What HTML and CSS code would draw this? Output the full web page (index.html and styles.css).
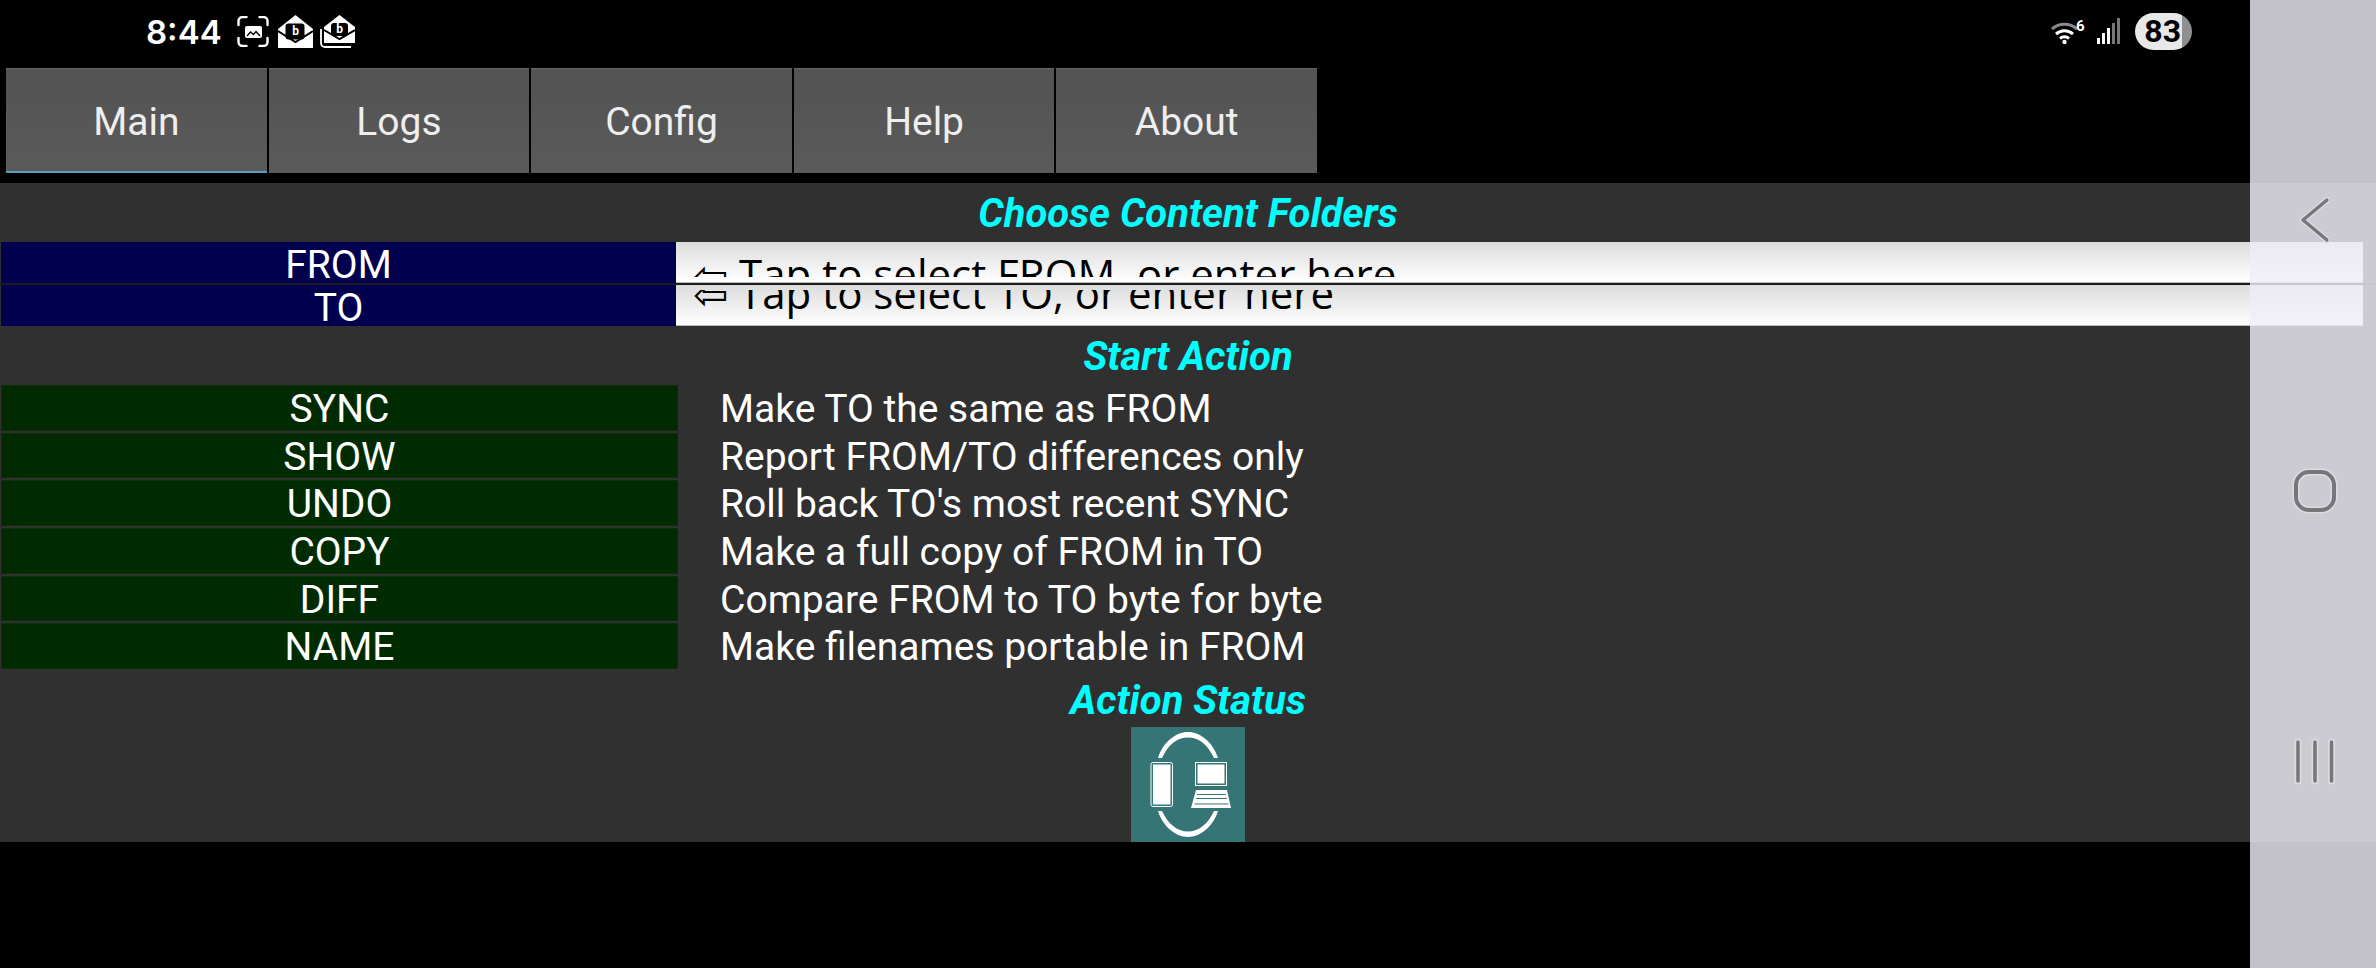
FILE: index.html
```html
<!DOCTYPE html>
<html lang="en">
<head>
    <meta charset="UTF-8">
    <meta name="viewport" content="width=device-width, initial-scale=1.0">
    <title>Main</title>
    <link rel="stylesheet" href="styles.css">
</head>
<body>
    <!-- phone status bar -->
    <div class="status-bar">
        <span class="clock">8:44</span>
        <svg class="ic-shot" width="32" height="31" viewBox="0 0 32 31">
            <path d="M1.5 9V5a4 4 0 0 1 4-4h4M22.5 1h4a4 4 0 0 1 4 4v4M30.5 22v4a4 4 0 0 1-4 4h-4M9.5 30h-4a4 4 0 0 1-4-4v-4" fill="none" stroke="#fff" stroke-width="2.4" stroke-linecap="round"/>
            <rect x="8" y="10" width="17" height="12" rx="2" fill="#fff"/>
            <path d="M10 20l3.500-4 3 2.500 2.500-3 4 4.500" fill="none" stroke="#000" stroke-width="1.400"/>
        </svg>
        <svg class="ic-mail" width="35" height="33" viewBox="0 0 35 33">
            <path d="M17.500 0L35 14V33H0V14Z" fill="#fff"/>
            <rect x="7.500" y="8.500" width="19" height="16" rx="3" fill="#000"/>
            <path d="M0 16l17.500 11L35 16" fill="none" stroke="#000" stroke-width="2"/>
            <text x="17.500" y="20" class="mail-b">b</text>
        </svg>
        <svg class="ic-mail" width="35" height="33" viewBox="0 0 35 33">
            <path d="M1 14V28a4 4 0 0 0 4 4H31" fill="none" stroke="#fff" stroke-width="1.800"/>
            <path d="M19.500 0L35 12V28H4V12Z" fill="#fff"/>
            <rect x="11" y="8" width="17" height="13" rx="3" fill="#000"/>
            <path d="M4 15l15.500 9L35 15" fill="none" stroke="#000" stroke-width="2"/>
            <text x="19.500" y="17.500" class="mail-b">b</text>
        </svg>

        <div class="status-right">
            <svg width="34" height="26" viewBox="0 0 34 26">
                <path d="M1 10a19 19 0 0 1 25 0" fill="none" stroke="#8a8a8a" stroke-width="3"/>
                <path d="M5 15a13 13 0 0 1 17 0" fill="none" stroke="#fff" stroke-width="3"/>
                <path d="M9 19.500a7 7 0 0 1 9 0" fill="none" stroke="#fff" stroke-width="3"/>
                <circle cx="13.500" cy="23" r="2.200" fill="#fff"/>
                <text x="25" y="12" class="wifi-six">6</text>
            </svg>
            <svg class="ic-signal" width="26" height="28" viewBox="0 0 26 28">
                <rect x="1" y="20" width="3" height="6" fill="#fff"/>
                <rect x="6" y="15" width="3" height="11" fill="#fff"/>
                <rect x="11" y="10" width="3" height="16" fill="#fff"/>
                <rect x="16" y="5" width="3" height="21" fill="#777"/>
                <rect x="21" y="0" width="3" height="26" fill="#777"/>
            </svg>
            <div class="battery">83</div>
        </div>
    </div>

    <div class="tabs">
        <div class="tab active">Main</div>
        <div class="tab">Logs</div>
        <div class="tab">Config</div>
        <div class="tab">Help</div>
        <div class="tab">About</div>
    </div>

    <div class="panel">
        <h2 class="heading heading-tall">Choose Content Folders</h2>

        <div class="folder-row">
            <div class="folder-btn">FROM</div>
            <div class="folder-input"><div class="hint hint-from">⇦ Tap to select FROM, or enter here</div></div>
        </div>
        <div class="folder-row">
            <div class="folder-btn">TO</div>
            <div class="folder-input"><div class="hint hint-to">⇦ Tap to select TO, or enter here</div></div>
        </div>

        <h2 class="heading heading-tall">Start Action</h2>

        <div class="actions">
            <div class="action-btn">SYNC</div>
            <div class="action-text">Make TO the same as FROM</div>
            <div class="action-btn">SHOW</div>
            <div class="action-text">Report FROM/TO differences only</div>
            <div class="action-btn">UNDO</div>
            <div class="action-text">Roll back TO's most recent SYNC</div>
            <div class="action-btn">COPY</div>
            <div class="action-text">Make a full copy of FROM in TO</div>
            <div class="action-btn">DIFF</div>
            <div class="action-text">Compare FROM to TO byte for byte</div>
            <div class="action-btn">NAME</div>
            <div class="action-text">Make filenames portable in FROM</div>
        </div>

        <h2 class="heading">Action Status</h2>

        <svg class="status-logo" width="114" height="115" viewBox="0 0 114 115">
            <rect width="114" height="115" fill="#357575"/>
            <!-- sync arcs -->
            <path d="M27 31C32 15 45 5 57 5S82 15 87 31H83C77 18 68 10.500 57 10.500S37 18 31 31Z" fill="#fff"/>
            <path d="M27 84C32 100 45 110 57 110S82 100 87 84H83C77 97 68 104.500 57 104.500S37 97 31 84Z" fill="#fff"/>
            <!-- phone -->
            <rect x="20" y="35.500" width="21.500" height="44" rx="2" fill="none" stroke="#fff" stroke-width="1"/>
            <rect x="22" y="37.500" width="17.500" height="40" fill="#fff"/>
            <!-- laptop -->
            <rect x="64.500" y="35.500" width="31" height="23" fill="none" stroke="#fff" stroke-width="1"/>
            <rect x="66.500" y="37.500" width="27" height="19" fill="#fff"/>
            <path d="M65 63H96L100 81H60Z" fill="#fff"/>
            <path d="M66 67.500H95M65 71.500H96M63.500 77H97.500" stroke="#357575" stroke-width="1"/>
        </svg>
    </div>

    <!-- android nav bar, see-through over the page -->
    <div class="nav-bar">
        <svg width="50" height="52" viewBox="0 0 50 52">
            <path d="M37 6L13 26L37 46" fill="none" stroke="#dedde2" stroke-width="6" stroke-linecap="round" stroke-linejoin="round"/>
            <path d="M37 6L13 26L37 46" fill="none" stroke="#77767c" stroke-width="3.500" stroke-linecap="round" stroke-linejoin="round"/>
        </svg>
        <svg width="50" height="52" viewBox="0 0 50 52">
            <rect x="6" y="7" width="38" height="38" rx="13" fill="none" stroke="#dcdbe0" stroke-width="7"/>
            <rect x="6" y="7" width="38" height="38" rx="13" fill="none" stroke="#77767c" stroke-width="4"/>
        </svg>
        <svg width="50" height="52" viewBox="0 0 50 52">
            <path d="M8 6V45M25 6V45M41.500 6V45" fill="none" stroke="#dcdbe0" stroke-width="7" stroke-linecap="round"/>
            <path d="M8 6V45M25 6V45M41.500 6V45" fill="none" stroke="#77767c" stroke-width="3.500" stroke-linecap="round"/>
        </svg>
    </div>
</body>
</html>
```

FILE: styles.css
```css
* {
    padding: 0;
    margin: 0;
    box-sizing: border-box;
}
body {
    position: relative;
    width: 2376px;
    height: 968px;
    overflow: hidden;
    background-color: #000;
    color: #fff;
    font-family: Roboto, sans-serif;
}

/* status bar */
.status-bar {
    display: flex;
    align-items: center;
    height: 68px;
    padding: 0 184px 5px 146px;
}
.clock {
    font-family: Inter, sans-serif;
    font-size: 33px;
    font-weight: 600;
    margin-right: 15px;
}
.ic-shot {
    margin-right: 9px;
}
.ic-mail {
    margin-right: 7px;
}
.mail-b {
    font-family: Roboto, sans-serif;
    font-size: 12px;
    font-weight: 700;
    fill: #fff;
    text-anchor: middle;
}
.status-right {
    display: flex;
    align-items: center;
    margin-left: auto;
}
.wifi-six {
    font-size: 15px;
    font-weight: 700;
    fill: #fff;
}
.ic-signal {
    margin-left: 11px;
}
.battery {
    width: 57px;
    height: 37px;
    margin-left: 13px;
    padding-right: 11px;
    border-radius: 19px;
    background: linear-gradient(to right, #e8e8e8 47px, #8f8f8f 47px);
    color: #000;
    font-size: 32px;
    font-weight: 700;
    line-height: 37px;
    text-align: right;
}

/* tabs */
.tabs {
    display: flex;
    gap: 2px;
    height: 105px;
    margin-bottom: 10px;
    padding-left: 6px;
}
.tab {
    width: 260.6px;
    padding-top: 30px;
    background: linear-gradient(#535353, #5a5a5a);
    border-top: 1px solid #666;
    color: #eee;
    font-size: 39px;
    text-align: center;
}
.active {
    border-bottom: 2px solid #5a9fc0;
}

/* main panel */
.panel {
    display: flex;
    flex-direction: column;
    height: 659px;
    background-color: #303030;
}
.heading {
    height: 56px;
    padding-top: 8px;
    color: #0ff;
    font-size: 40px;
    font-style: italic;
    font-weight: 700;
    line-height: 44px;
    text-align: center;
}
.heading-tall {
    height: 59px;
    padding-top: 9px;
}

.folder-row {
    display: flex;
    height: 41px;
}
.folder-row + .folder-row {
    height: 43px;
    border-top: 2px solid #1c1c1c;
}
.folder-btn {
    width: 675px;
    margin-left: 1px;
    background-color: #00004f;
    font-size: 39px;
    line-height: 46px;
    text-align: center;
}
.folder-input {
    width: 1687px;
    background: linear-gradient(#dcdcdc, #fff);
    border-bottom: 1px solid #bbb;
    color: #000;
    font-family: "Open Sans", "DejaVu Sans", sans-serif;
    font-size: 42px;
    padding-left: 17px;
}
.hint {
    height: 35px;
    overflow: hidden;
    white-space: nowrap;
}
.hint-from {
    line-height: 63px;
}
.hint-to {
    margin-top: 5px;
    line-height: 5px;
}

.actions {
    display: grid;
    grid-template-columns: 678px 1fr;
    grid-auto-rows: 47.7px;
}
.action-btn {
    margin: 0 0 2px 1px;
    background-color: #002b00;
    border: 1px solid #0a320a;
    font-size: 39px;
    line-height: 47px;
    text-align: center;
}
.action-text {
    padding-left: 42px;
    font-size: 39px;
    line-height: 49px;
}

.status-logo {
    display: block;
    margin: 0 auto;
}

/* nav bar on top of everything */
.nav-bar {
    position: absolute;
    top: 0;
    right: 0;
    display: flex;
    flex-direction: column;
    align-items: center;
    gap: 219px;
    width: 126px;
    height: 968px;
    padding: 194px 0 0 4px;
    background-color: rgba(239, 238, 245, 0.816);
}
```
